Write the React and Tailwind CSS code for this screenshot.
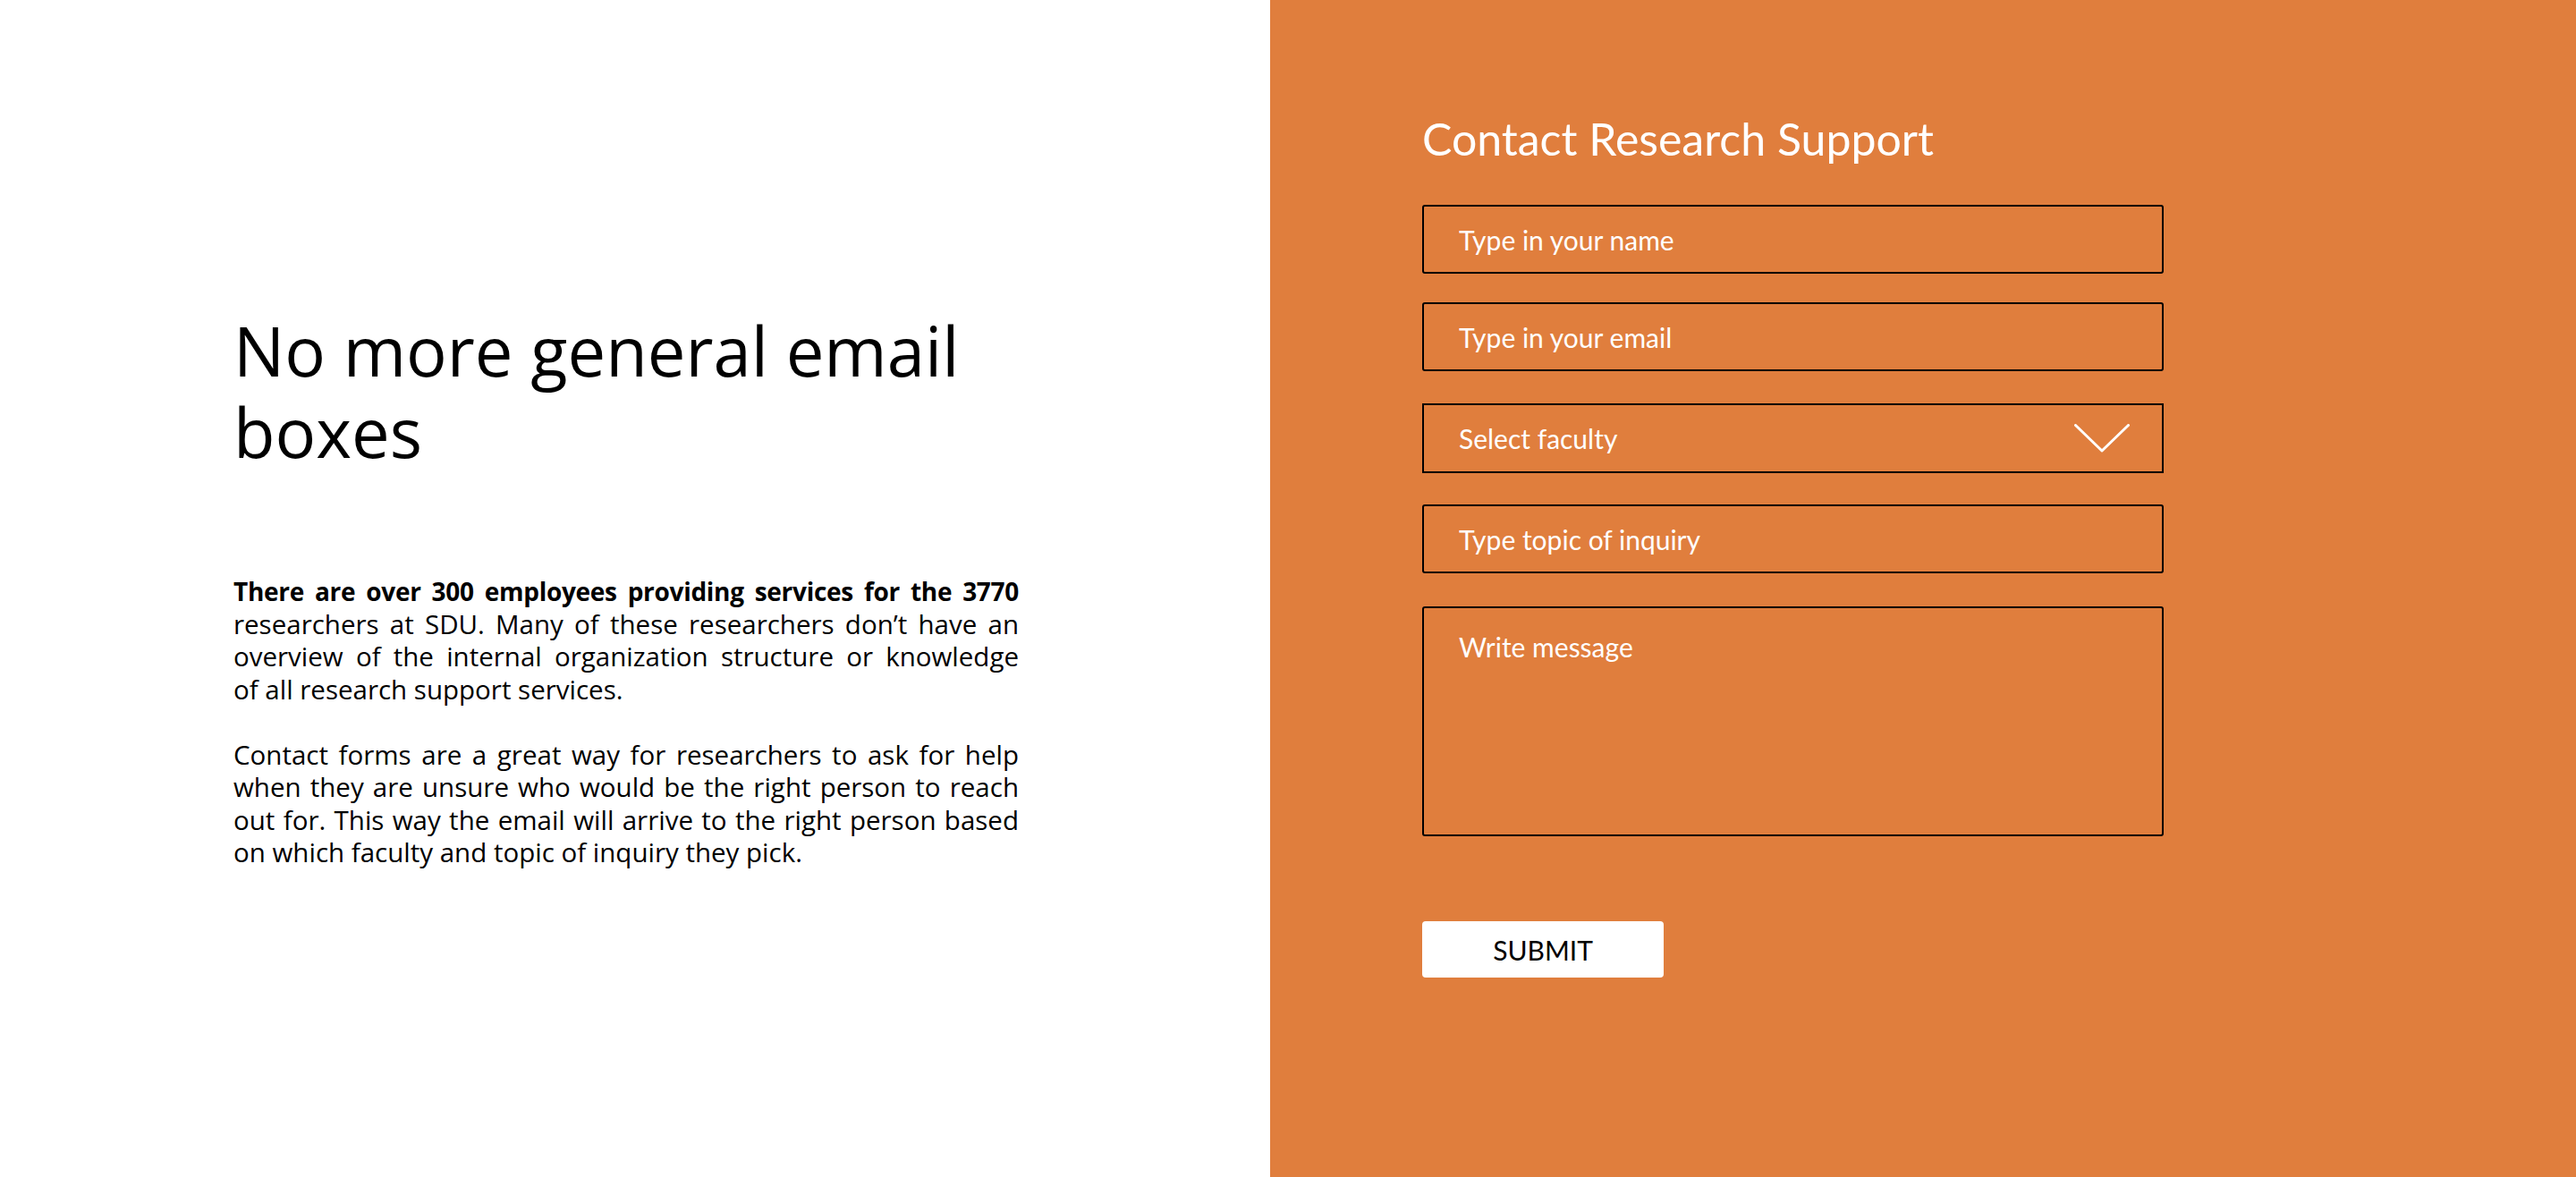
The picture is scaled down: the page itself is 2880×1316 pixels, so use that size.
import React from "react";

const fieldBase =
  "w-[829px] h-[77px] bg-transparent border-2 border-black rounded-[3px] pl-[39px] pr-4 text-[30px] leading-[36px] text-white placeholder:text-white outline-none";

// each line is set on its own so the justified breaks match the design
const line = "block whitespace-nowrap text-justify [text-align-last:justify]";

const App = () => {
  return (
    <div className="flex h-screen w-full font-['Lato',sans-serif]">
      <section className="w-[1420px] shrink-0 bg-white pl-[261px] pt-[346px] text-black font-['Open_Sans',sans-serif]">
        <h1 className="w-[878px] text-[76px] leading-[91px] font-normal">No more general email boxes</h1>

        <div className="mt-[115px] w-[878px] text-[29.5px] leading-[36.5px]">
          <p>
            <strong className={`${line} font-bold text-[28px] tracking-[-0.3px]`}>
              There are over 300 employees providing services for the 3770
            </strong>
            <span className={line}>researchers at SDU. Many of these researchers don’t have an</span>
            <span className={line}>overview of the internal organization structure or knowledge</span>
            <span className="block">of all research support services.</span>
          </p>
          <p className="mt-[36.5px]">
            <span className={line}>Contact forms are a great way for researchers to ask for help</span>
            <span className={line}>when they are unsure who would be the right person to reach</span>
            <span className={line}>out for. This way the email will arrive to the right person based</span>
            <span className="block">on which faculty and topic of inquiry they pick.</span>
          </p>
        </div>
      </section>

      <section className="flex-1 bg-[#e07e3d] pl-[170px] pt-[124px]">
        <h2 className="text-[50px] leading-[62px] font-normal text-white">Contact Research Support</h2>

        <form className="flex flex-col" onSubmit={(e) => e.preventDefault()}>
          <input type="text" placeholder="Type in your name" className={`${fieldBase} mt-[43px]`} />
          <input type="email" placeholder="Type in your email" className={`${fieldBase} mt-[32px]`} />

          <button
            type="button"
            className="mt-[36px] w-[829px] h-[78px] border-2 border-black flex items-center justify-between pl-[39px] pr-[36px] text-[30px] leading-[36px] text-white"
          >
            <span>Select faculty</span>
            <svg width="62" height="32" viewBox="0 0 62 32" fill="none">
              <polyline points="1.5,1.5 31,30 60.5,1.5" stroke="white" strokeWidth="3" strokeLinecap="round" strokeLinejoin="round" />
            </svg>
          </button>

          <input type="text" placeholder="Type topic of inquiry" className={`${fieldBase} mt-[35px]`} />

          <textarea
            placeholder="Write message"
            className="mt-[37px] w-[829px] h-[257px] resize-none bg-transparent border-2 border-black rounded-[3px] pl-[39px] pr-4 pt-[25px] text-[30px] leading-[36px] text-white placeholder:text-white outline-none"
          />

          <button
            type="submit"
            className="mt-[95px] w-[270px] h-[63px] bg-white rounded-[4px] text-[30px] leading-[36px] text-black"
          >
            SUBMIT
          </button>
        </form>
      </section>
    </div>
  );
};

export default App;
